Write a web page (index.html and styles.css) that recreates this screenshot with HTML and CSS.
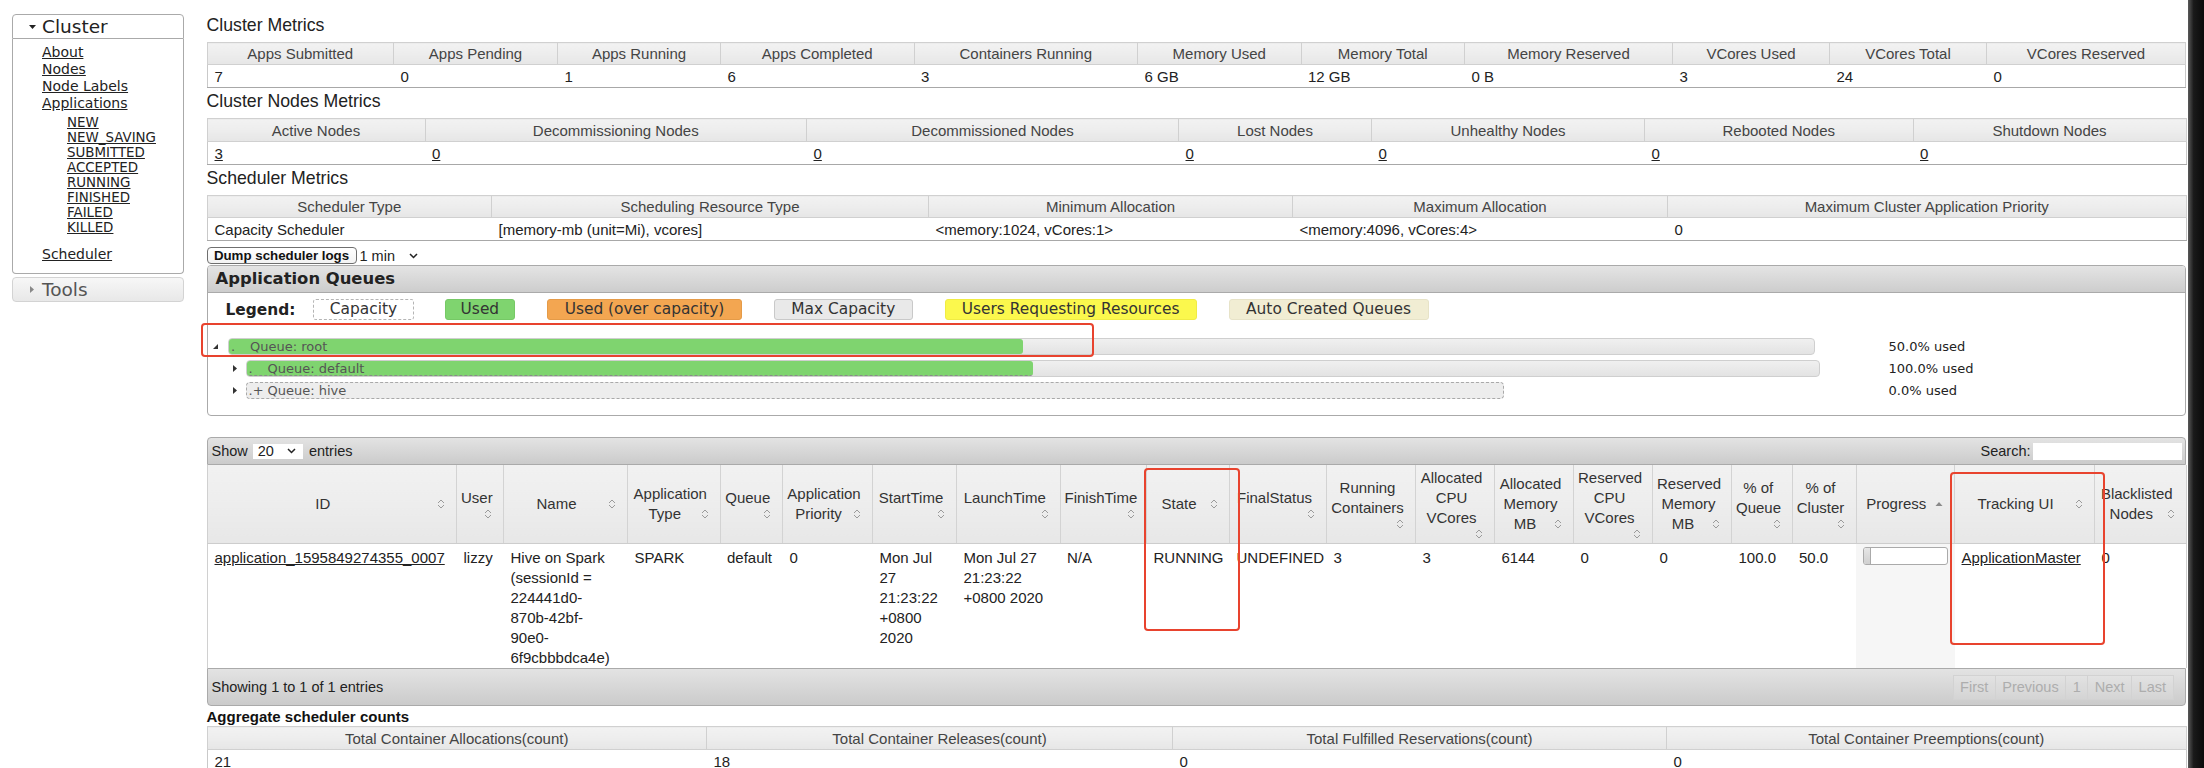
FILE: index.html
```html
<!DOCTYPE html>
<html lang="en">
<head>
<meta charset="utf-8">
<title>All Applications</title>
<link rel="stylesheet" href="styles.css">
</head>
<body>
<div class="page">
  <aside class="sidebar">
    <div class="acc-head open">
      <svg class="tri" width="7" height="4" viewBox="0 0 7 4"><path d="M0 0H7L3.5 4Z" fill="#222"/></svg>
      <span>Cluster</span>
    </div>
    <div class="acc-body">
      <ul class="nav">
        <li><a href="#">About</a></li>
        <li><a href="#">Nodes</a></li>
        <li><a href="#">Node Labels</a></li>
        <li><a href="#">Applications</a>
          <ul class="subnav">
            <li><a href="#">NEW</a></li>
            <li><a href="#">NEW_SAVING</a></li>
            <li><a href="#">SUBMITTED</a></li>
            <li><a href="#">ACCEPTED</a></li>
            <li><a href="#">RUNNING</a></li>
            <li><a href="#">FINISHED</a></li>
            <li><a href="#">FAILED</a></li>
            <li><a href="#">KILLED</a></li>
          </ul>
        </li>
        <li class="sched"><a href="#">Scheduler</a></li>
      </ul>
    </div>
    <div class="acc-head closed">
      <svg class="tri" width="4" height="7" viewBox="0 0 4 7"><path d="M0 0L4 3.5L0 7Z" fill="#888"/></svg>
      <span>Tools</span>
    </div>
  </aside>

  <main class="main">
    <h3 class="title">Cluster Metrics</h3>
    <table class="mt t1">
      <colgroup><col class="a1"><col class="a2"><col class="a3"><col class="a4"><col class="a5"><col class="a6"><col class="a7"><col class="a8"><col class="a9"><col class="a10"><col class="a11"></colgroup>
      <thead><tr><th>Apps Submitted</th><th>Apps Pending</th><th>Apps Running</th><th>Apps Completed</th><th>Containers Running</th><th>Memory Used</th><th>Memory Total</th><th>Memory Reserved</th><th>VCores Used</th><th>VCores Total</th><th>VCores Reserved</th></tr></thead>
      <tbody><tr><td>7</td><td>0</td><td>1</td><td>6</td><td>3</td><td>6 GB</td><td>12 GB</td><td>0 B</td><td>3</td><td>24</td><td>0</td></tr></tbody>
    </table>

    <h3 class="title">Cluster Nodes Metrics</h3>
    <table class="mt t2">
      <colgroup><col class="b1"><col class="b2"><col class="b3"><col class="b4"><col class="b5"><col class="b6"><col class="b7"></colgroup>
      <thead><tr><th>Active Nodes</th><th>Decommissioning Nodes</th><th>Decommissioned Nodes</th><th>Lost Nodes</th><th>Unhealthy Nodes</th><th>Rebooted Nodes</th><th>Shutdown Nodes</th></tr></thead>
      <tbody><tr><td><a href="#">3</a></td><td><a href="#">0</a></td><td><a href="#">0</a></td><td><a href="#">0</a></td><td><a href="#">0</a></td><td><a href="#">0</a></td><td><a href="#">0</a></td></tr></tbody>
    </table>

    <h3 class="title">Scheduler Metrics</h3>
    <table class="mt t3">
      <colgroup><col class="c1"><col class="c2"><col class="c3"><col class="c4"><col class="c5"></colgroup>
      <thead><tr><th>Scheduler Type</th><th>Scheduling Resource Type</th><th>Minimum Allocation</th><th>Maximum Allocation</th><th>Maximum Cluster Application Priority</th></tr></thead>
      <tbody><tr><td>Capacity Scheduler</td><td>[memory-mb (unit=Mi), vcores]</td><td>&lt;memory:1024, vCores:1&gt;</td><td>&lt;memory:4096, vCores:4&gt;</td><td>0</td></tr></tbody>
    </table>

    <div class="dump-row">
      <button class="dump">Dump scheduler logs</button>
      <span class="minsel">1 min<svg width="9" height="6" viewBox="0 0 9 6"><path d="M1 1L4.5 4.5L8 1" fill="none" stroke="#222" stroke-width="1.5"/></svg></span>
    </div>

    <section class="queues">
      <div class="q-head">Application Queues</div>
      <div class="legend">
        <b class="lg-title">Legend:</b>
        <span class="lg lg-cap">Capacity</span>
        <span class="lg lg-used">Used</span>
        <span class="lg lg-over">Used (over capacity)</span>
        <span class="lg lg-max">Max Capacity</span>
        <span class="lg lg-req">Users Requesting Resources</span>
        <span class="lg lg-auto">Auto Created Queues</span>
      </div>
      <div class="qtree">
        <div class="qrow l0">
          <div class="qcell">
            <span class="qtog"><svg width="5" height="5" viewBox="0 0 5 5"><path d="M5 0V5H0Z" fill="#333"/></svg></span>
            <div class="qbar root-bar">
              <div class="qused u-root"></div>
              <span class="qlabel"><span class="qdot">.</span>Queue: root</span>
            </div>
          </div>
          <span class="qpct">50.0% used</span>
        </div>
        <div class="qrow l1">
          <div class="qcell">
            <span class="qtog"><svg width="4" height="7" viewBox="0 0 4 7"><path d="M0 0L4 3.5L0 7Z" fill="#333"/></svg></span>
            <div class="qbar default-bar">
              <div class="qused u-default"></div>
              <span class="qlabel"><span class="qdot">.</span>Queue: default</span>
            </div>
          </div>
          <span class="qpct">100.0% used</span>
        </div>
        <div class="qrow l1">
          <div class="qcell">
            <span class="qtog"><svg width="4" height="7" viewBox="0 0 4 7"><path d="M0 0L4 3.5L0 7Z" fill="#333"/></svg></span>
            <div class="qbar hive-bar">
              <span class="qlabel"><span class="qdot">.+</span>Queue: hive</span>
            </div>
          </div>
          <span class="qpct">0.0% used</span>
        </div>
      </div>
    </section>

    <div class="dt">
      <div class="dt-top">
        <div class="dt-len">Show <span class="sel">20<svg width="9" height="6" viewBox="0 0 9 6"><path d="M1 1L4.5 4.5L8 1" fill="none" stroke="#222" stroke-width="1.5"/></svg></span> entries</div>
        <div class="dt-search">Search:<span class="search-box"></span></div>
      </div>
      <table class="apps">
        <colgroup>
          <col class="d-id"><col class="d-user"><col class="d-name"><col class="d-type"><col class="d-queue"><col class="d-prio"><col class="d-start"><col class="d-launch"><col class="d-finish"><col class="d-state"><col class="d-final"><col class="d-run"><col class="d-79"><col class="d-79"><col class="d-79"><col class="d-79"><col class="d-pq"><col class="d-pc"><col class="d-prog"><col class="d-track"><col class="d-black">
        </colgroup>
        <thead>
          <tr>
            <th>ID<svg class="srt" viewBox="0 0 8 12"><path d="M1 5L4 2L7 5M1 7L4 10L7 7" fill="none" stroke="#9a9a9a"/></svg></th>
            <th>User<br><svg class="srt nl" viewBox="0 0 8 12"><path d="M1 5L4 2L7 5M1 7L4 10L7 7" fill="none" stroke="#9a9a9a"/></svg></th>
            <th>Name<svg class="srt" viewBox="0 0 8 12"><path d="M1 5L4 2L7 5M1 7L4 10L7 7" fill="none" stroke="#9a9a9a"/></svg></th>
            <th>Application<br>Type<svg class="srt" viewBox="0 0 8 12"><path d="M1 5L4 2L7 5M1 7L4 10L7 7" fill="none" stroke="#9a9a9a"/></svg></th>
            <th>Queue<br><svg class="srt nl" viewBox="0 0 8 12"><path d="M1 5L4 2L7 5M1 7L4 10L7 7" fill="none" stroke="#9a9a9a"/></svg></th>
            <th>Application<br>Priority<svg class="srt" viewBox="0 0 8 12"><path d="M1 5L4 2L7 5M1 7L4 10L7 7" fill="none" stroke="#9a9a9a"/></svg></th>
            <th>StartTime<br><svg class="srt nl" viewBox="0 0 8 12"><path d="M1 5L4 2L7 5M1 7L4 10L7 7" fill="none" stroke="#9a9a9a"/></svg></th>
            <th>LaunchTime<br><svg class="srt nl" viewBox="0 0 8 12"><path d="M1 5L4 2L7 5M1 7L4 10L7 7" fill="none" stroke="#9a9a9a"/></svg></th>
            <th>FinishTime<br><svg class="srt nl" viewBox="0 0 8 12"><path d="M1 5L4 2L7 5M1 7L4 10L7 7" fill="none" stroke="#9a9a9a"/></svg></th>
            <th>State<svg class="srt" viewBox="0 0 8 12"><path d="M1 5L4 2L7 5M1 7L4 10L7 7" fill="none" stroke="#9a9a9a"/></svg></th>
            <th>FinalStatus<br><svg class="srt nl" viewBox="0 0 8 12"><path d="M1 5L4 2L7 5M1 7L4 10L7 7" fill="none" stroke="#9a9a9a"/></svg></th>
            <th>Running<br>Containers<br><svg class="srt nl" viewBox="0 0 8 12"><path d="M1 5L4 2L7 5M1 7L4 10L7 7" fill="none" stroke="#9a9a9a"/></svg></th>
            <th>Allocated<br>CPU<br>VCores<br><svg class="srt nl" viewBox="0 0 8 12"><path d="M1 5L4 2L7 5M1 7L4 10L7 7" fill="none" stroke="#9a9a9a"/></svg></th>
            <th>Allocated<br>Memory<br>MB<svg class="srt" viewBox="0 0 8 12"><path d="M1 5L4 2L7 5M1 7L4 10L7 7" fill="none" stroke="#9a9a9a"/></svg></th>
            <th>Reserved<br>CPU<br>VCores<br><svg class="srt nl" viewBox="0 0 8 12"><path d="M1 5L4 2L7 5M1 7L4 10L7 7" fill="none" stroke="#9a9a9a"/></svg></th>
            <th>Reserved<br>Memory<br>MB<svg class="srt" viewBox="0 0 8 12"><path d="M1 5L4 2L7 5M1 7L4 10L7 7" fill="none" stroke="#9a9a9a"/></svg></th>
            <th>% of<br>Queue<br><svg class="srt nl" viewBox="0 0 8 12"><path d="M1 5L4 2L7 5M1 7L4 10L7 7" fill="none" stroke="#9a9a9a"/></svg></th>
            <th>% of<br>Cluster<br><svg class="srt nl" viewBox="0 0 8 12"><path d="M1 5L4 2L7 5M1 7L4 10L7 7" fill="none" stroke="#9a9a9a"/></svg></th>
            <th class="sorted">Progress<svg class="srt" viewBox="0 0 8 12"><path d="M0.5 8L4 4L7.5 8Z" fill="#8a8a8a"/></svg></th>
            <th>Tracking UI<svg class="srt" viewBox="0 0 8 12"><path d="M1 5L4 2L7 5M1 7L4 10L7 7" fill="none" stroke="#9a9a9a"/></svg></th>
            <th>Blacklisted<br>Nodes<svg class="srt" viewBox="0 0 8 12"><path d="M1 5L4 2L7 5M1 7L4 10L7 7" fill="none" stroke="#9a9a9a"/></svg></th>
          </tr>
        </thead>
        <tbody>
          <tr>
            <td><a href="#">application_1595849274355_0007</a></td>
            <td>lizzy</td>
            <td>Hive on Spark (sessionId = 224441d0-870b-42bf-90e0-6f9cbbbdca4e)</td>
            <td>SPARK</td>
            <td>default</td>
            <td>0</td>
            <td>Mon Jul 27 21:23:22 +0800 2020</td>
            <td>Mon Jul 27 21:23:22 +0800 2020</td>
            <td>N/A</td>
            <td>RUNNING</td>
            <td class="nowrap">UNDEFINED</td>
            <td>3</td>
            <td>3</td>
            <td>6144</td>
            <td>0</td>
            <td>0</td>
            <td>100.0</td>
            <td>50.0</td>
            <td class="sorting"><div class="pbar"><div class="pval"></div></div></td>
            <td><a href="#">ApplicationMaster</a></td>
            <td>0</td>
          </tr>
        </tbody>
      </table>
      <div class="dt-bottom">
        <div class="dt-info">Showing 1 to 1 of 1 entries</div>
        <div class="pager">
          <span class="pg">First</span><span class="pg">Previous</span><span class="pg">1</span><span class="pg">Next</span><span class="pg">Last</span>
        </div>
      </div>
    </div>

    <h3 class="agg-title">Aggregate scheduler counts</h3>
    <table class="mt t4">
      <colgroup><col class="e1"><col class="e2"><col class="e3"><col class="e4"></colgroup>
      <thead><tr><th>Total Container Allocations(count)</th><th>Total Container Releases(count)</th><th>Total Fulfilled Reservations(count)</th><th>Total Container Preemptions(count)</th></tr></thead>
      <tbody><tr><td>21</td><td>18</td><td>0</td><td>0</td></tr></tbody>
    </table>
  </main>
</div>

<div class="mark mark-root"></div>
<div class="mark mark-state"></div>
<div class="mark mark-track"></div>
<div class="edge"></div>
</body>
</html>
```

FILE: styles.css
```css
* { box-sizing: border-box; }

html, body {
  margin: 0;
  padding: 0;
  background: #fff;
  overflow: hidden;
}

body {
  font-family: "Liberation Sans", Arial, sans-serif;
  font-size: 15px;
  color: #222;
  position: relative;
}

a { color: #222; text-decoration: underline; }

.page {
  display: flex;
  align-items: flex-start;
  padding-left: 12px;
}

/* ---------- sidebar ---------- */
.sidebar {
  flex: none;
  width: 172px;
  margin-top: 14px;
  font-family: "DejaVu Sans", Verdana, sans-serif;
}

.acc-head {
  height: 25px;
  display: flex;
  align-items: center;
  padding-left: 16px;
  font-size: 18.5px;
  border-radius: 4px 4px 0 0;
}

.acc-head .tri { margin-right: 6px; flex: none; }

.acc-head.open {
  border: 1px solid #aaa;
  background: #fff;
  color: #222;
}

.acc-head.closed {
  margin-top: 3px;
  border: 1px solid #d3d3d3;
  border-radius: 4px;
  background: linear-gradient(#f7f7f7, #e8e8e8);
  color: #555;
  padding-left: 17px;
}

.acc-head.closed .tri { margin-right: 8px; }

.acc-body {
  border: 1px solid #aaa;
  border-top: 0;
  border-radius: 0 0 4px 4px;
  padding: 5px 0 10px 29px;
}

.nav {
  list-style: none;
  margin: 0;
  padding: 0;
  font-size: 14px;
  line-height: 17px;
}

.subnav {
  list-style: none;
  margin: 3px 0 0 25px;
  padding: 0;
  font-size: 13.4px;
  line-height: 15px;
}

.nav .sched { margin-top: 11px; }

/* ---------- main ---------- */
.main {
  flex: none;
  width: 1979px;
  margin-left: 22.5px;
  padding-top: 14px;
}

.title {
  margin: 0 0 6px;
  font-size: 17.7px;
  line-height: 22px;
  font-weight: normal;
  color: #222;
}

.mt {
  width: 100%;
  border-collapse: collapse;
  table-layout: fixed;
  margin-bottom: 2px;
  border-left: 1px solid #c9c9c9;
  border-right: 1px solid #c9c9c9;
}

.mt th {
  height: 22px;
  padding: 0 4px;
  font-weight: normal;
  color: #444;
  text-align: center;
  white-space: nowrap;
  background: linear-gradient(#f2f2f2 0%, #ededed 50%, #e6e6e6 100%);
  border: 1px solid #d0d0d0;
}

.mt td {
  height: 23px;
  padding: 0 7px;
  text-align: left;
  color: #222;
  white-space: nowrap;
  border-bottom: 1px solid #a8a8a8;
}

.t2 th, .t2 td { height: 23px; }

.t1 .a1 { width: 186.5px; } .t1 .a2 { width: 164px; } .t1 .a3 { width: 163px; }
.t1 .a4 { width: 193.5px; } .t1 .a5 { width: 223.5px; } .t1 .a6 { width: 163.5px; }
.t1 .a7 { width: 163.5px; } .t1 .a8 { width: 208px; } .t1 .a9 { width: 157px; }
.t1 .a10 { width: 157px; } .t1 .a11 { width: 199px; }

.t2 .b1 { width: 218px; } .t2 .b2 { width: 381.5px; } .t2 .b3 { width: 372px; }
.t2 .b4 { width: 193px; } .t2 .b5 { width: 273px; } .t2 .b6 { width: 268.5px; }
.t2 .b7 { width: 273px; }

.t3 .c1 { width: 284.5px; } .t3 .c2 { width: 437px; } .t3 .c3 { width: 364px; }
.t3 .c4 { width: 375px; } .t3 .c5 { width: 518.5px; }

.t4 .e1 { width: 499.5px; } .t4 .e2 { width: 466px; } .t4 .e3 { width: 494px; }
.t4 .e4 { width: 519.5px; }

/* ---------- dump ---------- */
.dump-row {
  display: flex;
  align-items: center;
  height: 17px;
  margin-top: 6px;
  gap: 3px;
}

.dump {
  height: 17px;
  padding: 0 6px;
  border: 1px solid #6f6f6f;
  border-radius: 4px;
  background: linear-gradient(#fff, #f3f3f3);
  font-family: "Liberation Sans", Arial, sans-serif;
  font-size: 13.3px;
  font-weight: bold;
  color: #111;
  line-height: 15px;
  width: 150px;
}

.minsel {
  display: inline-flex;
  align-items: center;
  gap: 14px;
  font-size: 14.5px;
  color: #222;
}

/* ---------- application queues ---------- */
.queues {
  margin-top: 1px;
  border: 1px solid #aaa;
  border-radius: 4px;
  font-family: "DejaVu Sans", Verdana, sans-serif;
}

.q-head {
  height: 27px;
  line-height: 26px;
  padding-left: 8px;
  font-size: 16.4px;
  font-weight: bold;
  color: #222;
  background: linear-gradient(#e4e4e4, #cdcdcd);
  border-bottom: 1px solid #aaa;
  border-radius: 3px 3px 0 0;
}

.legend {
  display: flex;
  align-items: center;
  padding: 6px 0 0 18px;
  font-size: 15.4px;
  color: #333;
}

.lg-title {
  font-weight: bold;
  color: #222;
  margin-right: 18px;
}

.lg {
  height: 21px;
  line-height: 19px;
  padding: 0 16.5px;
  border: 1px solid transparent;
  border-radius: 3px;
  margin-right: 32px;
  white-space: nowrap;
}

.lg-cap  { border: 1px dashed #b5b5b5; background: #fff; padding: 0 15.5px; margin-right: 31px; }
.lg-used { background: #7fd46f; border-color: #76c966; padding: 0 15px; }
.lg-over { background: #f3a651; border-color: #e59b48; }
.lg-max  { background: #e9e9e9; border-color: #c9c9c9; }
.lg-req  { background: #fbf84d; border-color: #f0ec44; padding: 0 16px; }
.lg-auto { background: #f1edd3; border-color: #e7e3c8; }

.qtree { padding: 15px 0 14px; }

.qrow {
  display: flex;
  align-items: center;
  height: 22px;
}

.qcell {
  flex: none;
  width: 1681px;
  display: flex;
  align-items: center;
}

.l0 .qcell { padding-left: 5.5px; }
.l1 .qcell { padding-left: 25.5px; }

.qtog { flex: none; display: flex; align-items: center; }
.l0 .qtog { width: 15px; padding-top: 1px; }
.l1 .qtog { width: 12.5px; }

.qbar {
  position: relative;
  flex: none;
  height: 17px;
  border: 1px solid #cfcfcf;
  border-radius: 4px;
  background: linear-gradient(#f0f0f0, #e3e3e3);
}

.root-bar { width: 1587px; }
.default-bar { width: 1574px; }
.hive-bar { width: 1258px; border: 1px dashed #a9a9a9; background: #ededed; }

.qused {
  height: 100%;
  background: #7fd46f;
  border-radius: 3px;
}

.u-root { width: 794px; }
.u-default { width: 786px; border-bottom: 1px dashed #8a8a8a; }

.qlabel {
  position: absolute;
  left: 2px;
  top: 0;
  line-height: 15px;
  font-size: 13px;
  color: #555;
  white-space: nowrap;
}

.qdot { display: inline-block; width: 19px; }

.qpct {
  font-size: 13px;
  color: #222;
  white-space: nowrap;
}

/* ---------- data table ---------- */
.dt { margin-top: 21px; }

.dt-top {
  height: 28px;
  display: flex;
  align-items: center;
  justify-content: space-between;
  padding: 0 3px 0 4px;
  border: 1px solid #aaa;
  border-radius: 4px 4px 0 0;
  background: linear-gradient(#e3e3e3, #cbcbcb);
  font-size: 14.5px;
  color: #222;
}

.dt-len { display: flex; align-items: center; }

.sel {
  display: inline-flex;
  align-items: center;
  gap: 13px;
  height: 15px;
  margin: 0 6px 0 5px;
  padding: 0 7px 0 5px;
  background: #fff;
}

.dt-search { display: flex; align-items: center; }

.search-box {
  display: inline-block;
  width: 149px;
  height: 17px;
  margin-left: 2px;
  background: #fff;
}

.apps {
  width: 100%;
  border-collapse: collapse;
  table-layout: fixed;
  border-left: 1px solid #d0d0d0;
  border-right: 1px solid #d0d0d0;
}

.apps .d-id { width: 249.5px; }
.apps .d-user { width: 47px; }
.apps .d-name { width: 124px; }
.apps .d-type { width: 92.5px; }
.apps .d-queue { width: 62.5px; }
.apps .d-prio { width: 90px; }
.apps .d-start { width: 84px; }
.apps .d-launch { width: 103.5px; }
.apps .d-finish { width: 86.5px; }
.apps .d-state { width: 83px; }
.apps .d-final { width: 97px; }
.apps .d-run { width: 89px; }
.apps .d-79 { width: 79px; }
.apps .d-pq { width: 60.5px; }
.apps .d-pc { width: 64px; }
.apps .d-prog { width: 98.5px; }
.apps .d-track { width: 140px; }
.apps .d-black { width: 91.5px; }

.apps th {
  padding: 3px 11px 3px 4px;
  font-weight: normal;
  font-size: 15px;
  line-height: 20px;
  color: #333;
  text-align: center;
  vertical-align: middle;
  background: linear-gradient(#f1f1f1 0%, #ededed 50%, #e7e7e7 100%);
  border-right: 1px solid #d3d3d3;
  border-bottom: 1px solid #cdcdcd;
}

.apps th:last-child { border-right: 0; }

.srt {
  float: right;
  width: 8px;
  height: 12px;
  margin: 4px 0 0 3px;
}

.srt.nl { margin-top: 0; }

.apps td {
  padding: 4px 7px 0;
  line-height: 20px;
  vertical-align: top;
  text-align: left;
  color: #222;
}

.apps td.nowrap { white-space: nowrap; }

.apps td.sorting { background: #f6f6f6; padding-top: 3px; }

.pbar {
  width: 85px;
  height: 18px;
  border: 1px solid #aaa;
  border-radius: 3px;
  background: #fff;
  overflow: hidden;
}

.pval {
  width: 7px;
  height: 100%;
  background: linear-gradient(#e6e6e6, #cfcfcf);
  border-right: 1px solid #aaa;
}

.dt-bottom {
  height: 38px;
  display: flex;
  align-items: center;
  justify-content: space-between;
  padding: 0 11px 0 4px;
  border: 1px solid #aaa;
  border-radius: 0 0 4px 4px;
  background: linear-gradient(#e3e3e3, #cbcbcb);
  font-size: 14.5px;
  color: #222;
}

.pager { display: flex; height: 25px; }

.pg {
  display: flex;
  align-items: center;
  padding: 0 6.5px;
  color: #adadad;
  border: 1px solid #d2d2d2;
  margin-left: -1px;
  background: rgba(255, 255, 255, 0.12);
}

.agg-title {
  margin: 2px 0 0;
  font-size: 15px;
  line-height: 18px;
  font-weight: bold;
  color: #111;
}

.t4 th { height: 23px; }

/* ---------- annotation overlays ---------- */
.mark {
  position: absolute;
  border: 2.5px solid #e8432e;
  border-radius: 4px;
  pointer-events: none;
}

.mark-root  { left: 201px;  top: 323px; width: 893px; height: 34px; }
.mark-state { left: 1144px; top: 468px; width: 96px;  height: 163px; }
.mark-track { left: 1950px; top: 472px; width: 155px; height: 173px; }

.edge {
  position: fixed;
  top: 0;
  right: 0;
  width: 16px;
  height: 100%;
  background: linear-gradient(to right, #5a5a5a, #1a1a1a 35%, #0a0a0a);
}
```
